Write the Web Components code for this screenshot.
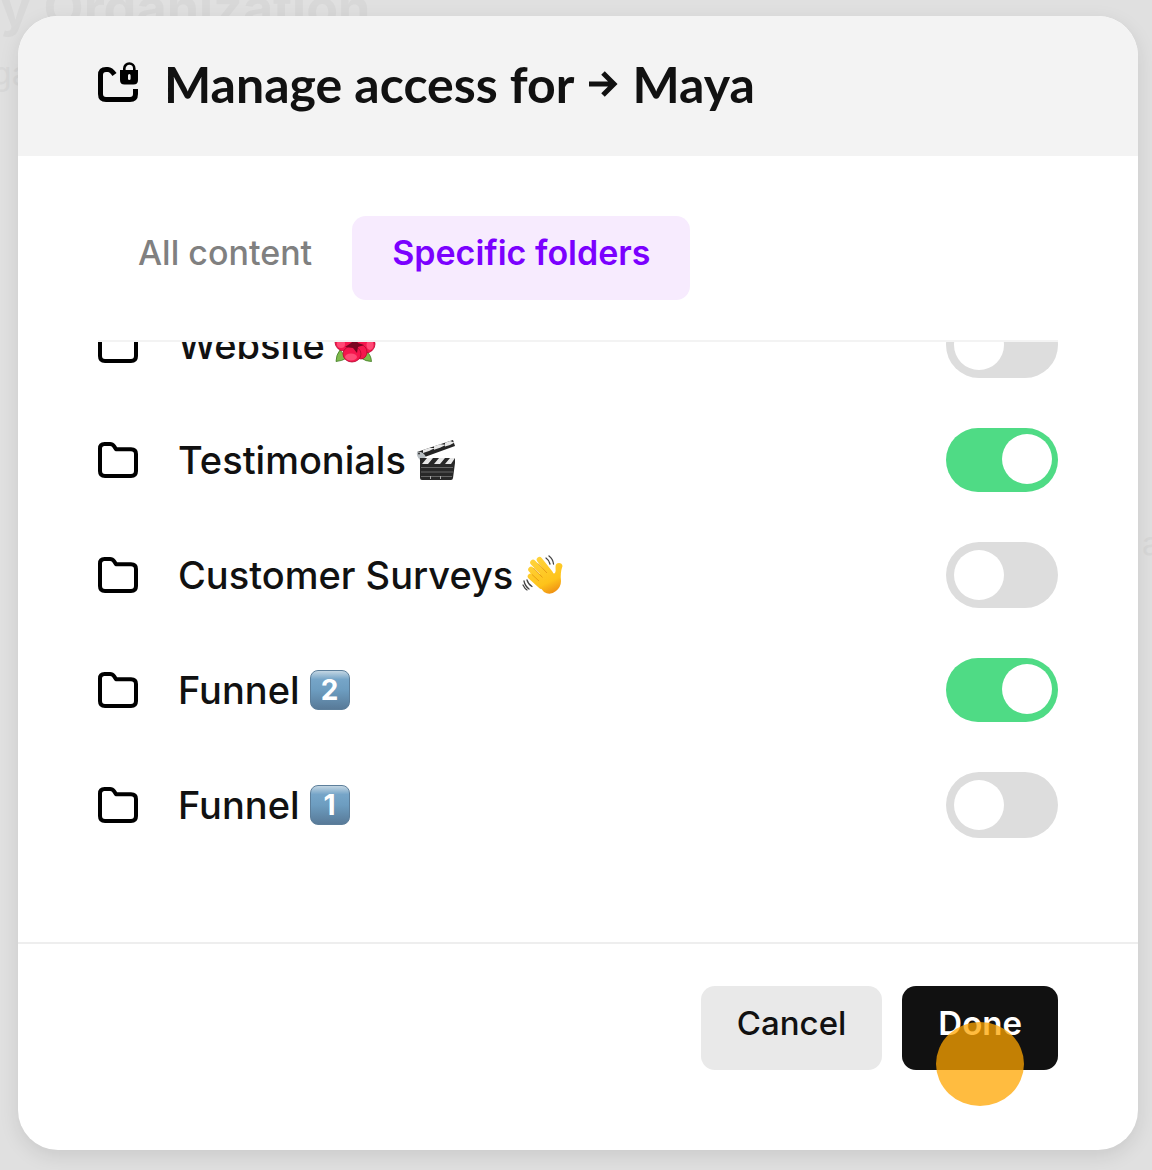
<!DOCTYPE html>
<html lang="en">
<head>
<meta charset="utf-8">
<meta name="viewport" content="width=device-width, initial-scale=1">
<title>Manage access</title>
<style>
  body { margin: 0; background: #e0e0e0; color: #111; font-family: Inter, "Liberation Sans", sans-serif; }
</style>
</head>
<body>
<access-app></access-app>
<script>
const define = (name, html, setup) => {
  const tpl = document.createElement('template');
  tpl.innerHTML = html;
  customElements.define(name, class extends HTMLElement {
    constructor() {
      super();
      this.attachShadow({ mode: 'open' }).append(tpl.content.cloneNode(true));
    }
    connectedCallback() { if (setup) setup(this, this.shadowRoot); }
  });
};

define('page-behind', `
  <style>
    :host { display: block; overflow: hidden; color: #d8d8d8; }
    h1 { margin: -26px 0 0; font-size: 52px; line-height: 68px; font-weight: 700; white-space: nowrap; }
    p { margin: 12px -8px 0; font-size: 32px; line-height: 40px; }
    .end { margin-top: 430px; text-align: right; }
  </style>
  <h1>y Organization</h1>
  <p>ga</p>
  <p class="end">a</p>`);

define('folder-icon', `
  <style>:host { display: block; flex: none; width: 40px; height: 40px; } svg { display: block; }</style>
  <svg width="40" height="40" viewBox="0 0 40 40" fill="none" stroke="#000" stroke-width="4" stroke-linejoin="round" aria-hidden="true">
    <path d="M2 8.500Q2 4 6.500 4H12Q14.500 4 16 6.200L18 9.200H33Q38 9.200 38 14V31Q38 36 33 36H7Q2 36 2 31Z"/>
  </svg>`);

define('folder-lock-icon', `
  <style>:host { display: block; flex: none; width: 42px; height: 44px; } svg { display: block; }</style>
  <svg width="42" height="44" viewBox="0 0 42 44" fill="none" aria-hidden="true">
    <path d="M16.500 12.500Q13 7.500 10 7.500H8Q2.500 7.500 2.500 13V32Q2.500 37.500 8 37.500H32Q37.500 37.500 37.500 32V27" stroke="#000" stroke-width="5"/>
    <path d="M26.300 9V6.500a5 5 0 0 1 10 0V9" stroke="#000" stroke-width="2.600"/>
    <path fill="#000" fill-rule="evenodd" d="M22 8H40V18Q40 22.500 35.500 22.500H26.500Q22 22.500 22 18ZM31.300 12Q30 12 30 13.500V16.500Q30 18 31.300 18T32.600 16.500V13.500Q32.600 12 31.300 12Z"/>
  </svg>`);

const emoji = {
  hibiscus: `
    <g stroke="#3d7a22" stroke-width=".8" fill="#7fbb4c"><path d="M5 25Q1 30 1 36.500Q7 36 12 33ZM30 25Q36 29 36.500 36.500Q31 36.500 26 33Z"/></g>
    <g fill="#f5164d" stroke="#b5052f" stroke-width=".8">
      <ellipse cx="20" cy="9" rx="10" ry="9"/><ellipse cx="9" cy="17" rx="9" ry="9"/><ellipse cx="31" cy="19" rx="9" ry="9"/>
      <ellipse cx="26" cy="27" rx="6" ry="7"/><ellipse cx="17" cy="29" rx="9" ry="8"/>
    </g>
    <g fill="#ff4a76"><ellipse cx="6" cy="19" rx="4" ry="4"/><ellipse cx="35" cy="20" rx="3.500" ry="5"/><ellipse cx="16" cy="32" rx="6" ry="3.500"/></g>
    <path fill="#7a0420" d="M20 14l3 4 6 2-6 2-1 6-4-5-8-1 6-4Z"/>`,
  clapper: `
    <path fill="#242424" d="M1 12L37 0l2 6L6 18Z"/>
    <path fill="#e8e8e8" d="M7 10l6-2 6 0-6 3-6 2ZM18 6.300l6-2 6 .4-6 3-6 2ZM29 2.700l5-1.700 4.500 1.500L34 5l-5 1.500Z"/>
    <path fill="#b8bec2" d="M1 12q6-1 9 5l-6 3q-4-4-3-8Z"/><circle cx="3" cy="13.500" r="1" fill="#333"/>
    <path fill="#282828" d="M4 18H39V23L37 38q-.2 2-2 2H6q-2 0-2-2Z"/>
    <path fill="#e8e8e8" d="M11 18h6l-5 6H6ZM23 18h6l-5 6h-6ZM34 18h5l-4 6h-6Z"/>
    <path stroke="#666" stroke-width="1" d="M5 27.500H37M5 32H37M5 36.500H36"/><path stroke="#aaa" d="M14.500 36v3M24.500 36v3"/>`,
  wave: `
    <linearGradient id="g" gradientUnits="userSpaceOnUse" x1="10" y1="2" x2="28" y2="40"><stop stop-color="#ffd43d"/><stop offset=".7" stop-color="#fec31a"/><stop offset="1" stop-color="#ee8d13"/></linearGradient>
    <g stroke="url(#g)" stroke-width="5.600" stroke-linecap="round" fill="none"><path d="M8 14.500L18 25M10 7.500L22 20M16.500 4.800L27 18M7.500 21.500L18 31"/></g>
    <path fill="url(#g)" d="M10 24L26 13Q30 20 32 18Q33 16 32.500 12Q32.500 8 36 8Q39 8 39.500 11Q37 18 38 26Q38 32 33 36Q27 41 21 37Z"/>
    <path stroke="#e59a12" stroke-width=".9" fill="none" d="M10.500 13L19.500 22.500M15 8.500L24 18M9 19.500L16 26"/>
    <path stroke="#444" stroke-width="1.300" fill="none" stroke-linecap="round" d="M23 3q3 2 4 6M26 1q4 3 4.500 8M1 26q1 5 5 8M4 25q1 4 5 6.500M0 30q2 4 4 5"/>`
};
customElements.define('emoji-icon', class extends HTMLElement {
  connectedCallback() {
    const root = this.attachShadow({ mode: 'open' });
    root.innerHTML = `<style>:host { display: block; flex: none; } svg { display: block; overflow: visible; }</style>
      <svg width="40" height="40" viewBox="0 0 40 40" aria-hidden="true">${emoji[this.getAttribute('name')]}</svg>`;
  }
});

define('key-cap', `
  <style>
    :host { display: block; flex: none; box-sizing: border-box; width: 40px; height: 40px; border-radius: 8px;
      border: 1px solid #5d7f9b; background: linear-gradient(#c3d6e3, #76a5c8 22%, #6d9dc0 50%, #587a98);
      color: #fff; font-size: 28px; line-height: 38px; font-weight: 700; text-align: center; }
  </style><slot></slot>`);

define('toggle-switch', `
  <style>
    :host { display: block; flex: none; }
    input { appearance: none; display: flex; align-items: flex-start; box-sizing: border-box; margin: 0; cursor: pointer;
      width: 112px; height: 66px; padding: 8px; border-radius: 33px; background: #ddd; }
    input::before { content: ""; width: 50px; height: 50px; border-radius: 50%; background: #fff; }
    input:checked { height: 64px; padding: 6px; justify-content: flex-end; background: #4fdb85; }
  </style>
  <input type="checkbox" role="switch">`, (host, root) => {
    const input = root.querySelector('input');
    input.checked = host.hasAttribute('checked');
    input.setAttribute('aria-label', host.getAttribute('label'));
  });

define('folder-row', `
  <style>
    :host { display: flex; align-items: center; justify-content: space-between; }
    .name { display: flex; align-items: center; gap: 40px; }
    .label { display: flex; align-items: center; gap: 10px; font-size: 38px; line-height: 48px; font-weight: 450; white-space: nowrap; }
  </style>
  <div class="name"><folder-icon></folder-icon><span class="label"><slot></slot></span></div>
  <slot name="control"></slot>`);

define('folder-list', `
  <style>
    :host { display: block; overflow: hidden; margin: 0 80px; border-top: 2px solid #f3f3f3; }
    .rows { display: flex; flex-direction: column; gap: 50px; margin-top: -30px; padding-bottom: 104px; }
  </style>
  <div class="rows"><slot></slot></div>`);

define('content-tabs', `
  <style>
    :host { display: flex; padding: 60px 80px 40px; }
    button { height: 84px; padding: 0 40px 10px; border: 0; border-radius: 14px; background: none; color: #808080;
      font: 450 34px/40px Inter, sans-serif; white-space: nowrap; cursor: pointer; }
    [aria-selected=true] { background: #f7ebfe; color: #7b00ff; font-weight: 600; }
  </style>
  <button role="tab" aria-selected="false">All content</button>
  <button role="tab" aria-selected="true">Specific folders</button>`);

define('action-button', `
  <style>
    :host { display: block; }
    button { height: 84px; padding: 0 36px 10px; border: 0; border-radius: 14px; background: #e9e9e9; color: #111;
      font: 500 33px/40px Inter, sans-serif; cursor: pointer; }
    :host([primary]) button { background: #111; color: #fff; font-weight: 600; }
  </style>
  <button type="button"><slot></slot></button>`);

define('click-marker', `
  <style>
    :host { position: absolute; right: 34px; top: 36px; width: 88px; height: 84px; border-radius: 50%;
      background: rgba(255, 165, 0, .75); pointer-events: none; }
  </style>`);

define('access-dialog', `
  <style>
    :host { display: block; align-self: start; margin: 16px 14px 20px 18px; border-radius: 40px; overflow: hidden; background: #fff;
      box-shadow: 0 6px 20px rgba(0, 0, 0, .1); }
    header { display: flex; align-items: center; gap: 24px; height: 140px; padding: 0 80px 4px; background: #f3f3f3; box-sizing: border-box; }
    h2 { display: flex; align-items: center; gap: 14px; margin: 0; font: 700 50px/60px Lato, sans-serif; white-space: nowrap; }
    footer { display: flex; justify-content: flex-end; gap: 20px; padding: 42px 80px 80px; border-top: 2px solid #eee; }
    .done { position: relative; }
  </style>
  <header>
    <folder-lock-icon></folder-lock-icon>
    <h2><span>Manage access for</span>
      <svg width="30" height="28" viewBox="0 0 30 28" fill="none" stroke="#111" stroke-width="5" role="img" aria-label="to"><path d="M1 14H26M15 3L26 14L15 25"/></svg>
      <span>Maya</span></h2>
  </header>
  <content-tabs role="tablist"></content-tabs>
  <folder-list>
    <folder-row>Website <emoji-icon name="hibiscus"></emoji-icon><toggle-switch slot="control" label="Website"></toggle-switch></folder-row>
    <folder-row>Testimonials <emoji-icon name="clapper"></emoji-icon><toggle-switch slot="control" label="Testimonials" checked></toggle-switch></folder-row>
    <folder-row>Customer Surveys <emoji-icon name="wave"></emoji-icon><toggle-switch slot="control" label="Customer Surveys"></toggle-switch></folder-row>
    <folder-row>Funnel <key-cap>2</key-cap><toggle-switch slot="control" label="Funnel 2" checked></toggle-switch></folder-row>
    <folder-row>Funnel <key-cap>1</key-cap><toggle-switch slot="control" label="Funnel 1"></toggle-switch></folder-row>
  </folder-list>
  <footer>
    <action-button>Cancel</action-button>
    <div class="done"><action-button primary>Done</action-button><click-marker></click-marker></div>
  </footer>`);

define('access-app', `
  <style>
    :host { display: grid; min-height: 100vh; }
    page-behind, access-dialog { grid-area: 1 / 1; min-width: 0; }
  </style>
  <page-behind></page-behind>
  <access-dialog role="dialog" aria-label="Manage access for Maya"></access-dialog>`);
</script>
</body>
</html>
